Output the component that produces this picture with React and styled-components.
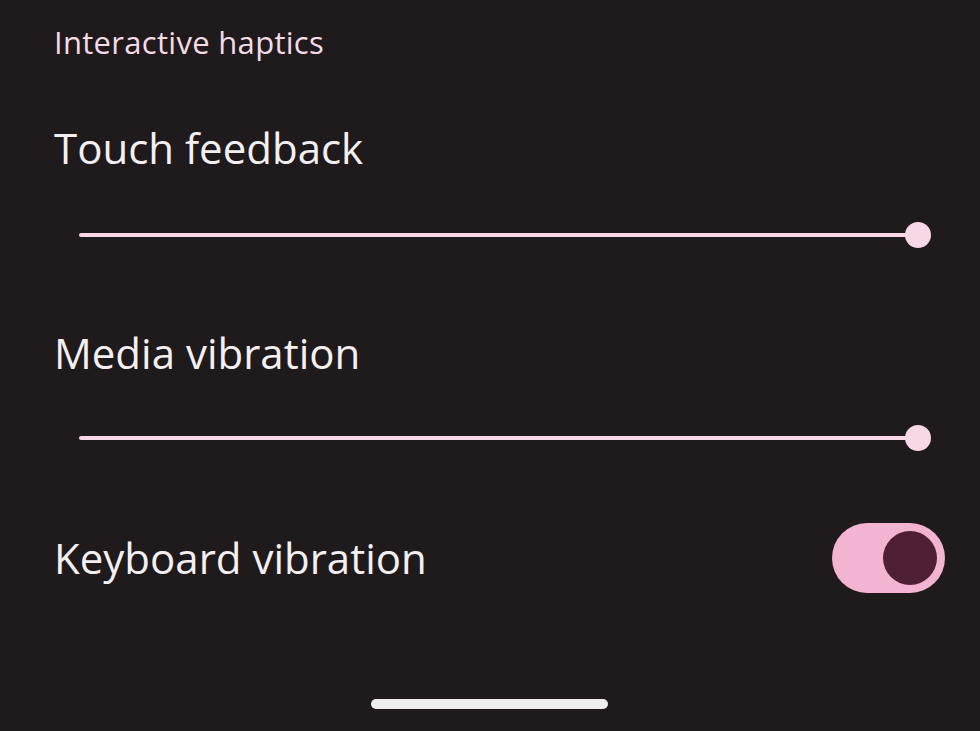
import React from "react";
import styled, { createGlobalStyle } from "styled-components";

const Global = createGlobalStyle`
  html, body { margin: 0; padding: 0; background: #1f1a1c; }
  body { font-family: "Open Sans", Roboto, sans-serif; }
`;

const Page = styled.div`
  width: 980px;
  height: 731px;
  box-sizing: border-box;
  padding: 24px 35px 0 54px;
  background: #1f1a1c;
  display: flex;
  flex-direction: column;
  overflow: hidden;
`;

const SectionHeader = styled.div`
  font-size: 31px;
  line-height: 36px;
  letter-spacing: 0.3px;
  color: #f5dbe6;
  font-weight: 400;
`;

const Title = styled.div`
  font-size: 42px;
  line-height: 50px;
  color: #f4eff1;
  margin-top: ${(p) => p.$gap}px;
`;

const SliderWrap = styled.div`
  height: 40px;
  margin: ${(p) => p.$gap}px 14px 0 25px;
  display: flex;
  align-items: center;
`;

const Track = styled.div`
  flex: 1;
  height: 4px;
  border-radius: 2px;
  background: #f8d8e6;
`;

const Thumb = styled.div`
  width: 26px;
  height: 26px;
  border-radius: 50%;
  background: #f8d8e6;
  margin-left: -13px;
  flex: none;
`;

const ToggleRow = styled.div`
  margin-top: 65px;
  height: 70px;
  display: flex;
  align-items: center;
  justify-content: space-between;
`;

const RowLabel = styled.div`
  font-size: 42px;
  line-height: 50px;
  color: #f4eff1;
`;

const Switch = styled.div`
  width: 113px;
  height: 70px;
  border-radius: 35px;
  background: #f2b4d0;
  display: flex;
  align-items: center;
  justify-content: ${(p) => (p.$on ? "flex-end" : "flex-start")};
  padding: 0 8px;
  box-sizing: border-box;
`;

const Knob = styled.div`
  width: 54px;
  height: 54px;
  border-radius: 50%;
  background: #4f1f35;
`;

const HomeBar = styled.div`
  align-self: flex-start;
  margin: auto 0 22px 317px;
  width: 237px;
  height: 10px;
  border-radius: 5px;
  background: #eeeeee;
`;

const Slider = ({ gap }) => (
  <SliderWrap $gap={gap}>
    <Track />
    <Thumb />
  </SliderWrap>
);

export default function App() {
  return (
    <>
      <Global />
      <Page>
        <SectionHeader>Interactive haptics</SectionHeader>
        <Title $gap={63}>Touch feedback</Title>
        <Slider gap={42} />
        <Title $gap={73}>Media vibration</Title>
        <Slider gap={40} />
        <ToggleRow>
          <RowLabel>Keyboard vibration</RowLabel>
          <Switch $on>
            <Knob />
          </Switch>
        </ToggleRow>
        <HomeBar />
      </Page>
    </>
  );
}
